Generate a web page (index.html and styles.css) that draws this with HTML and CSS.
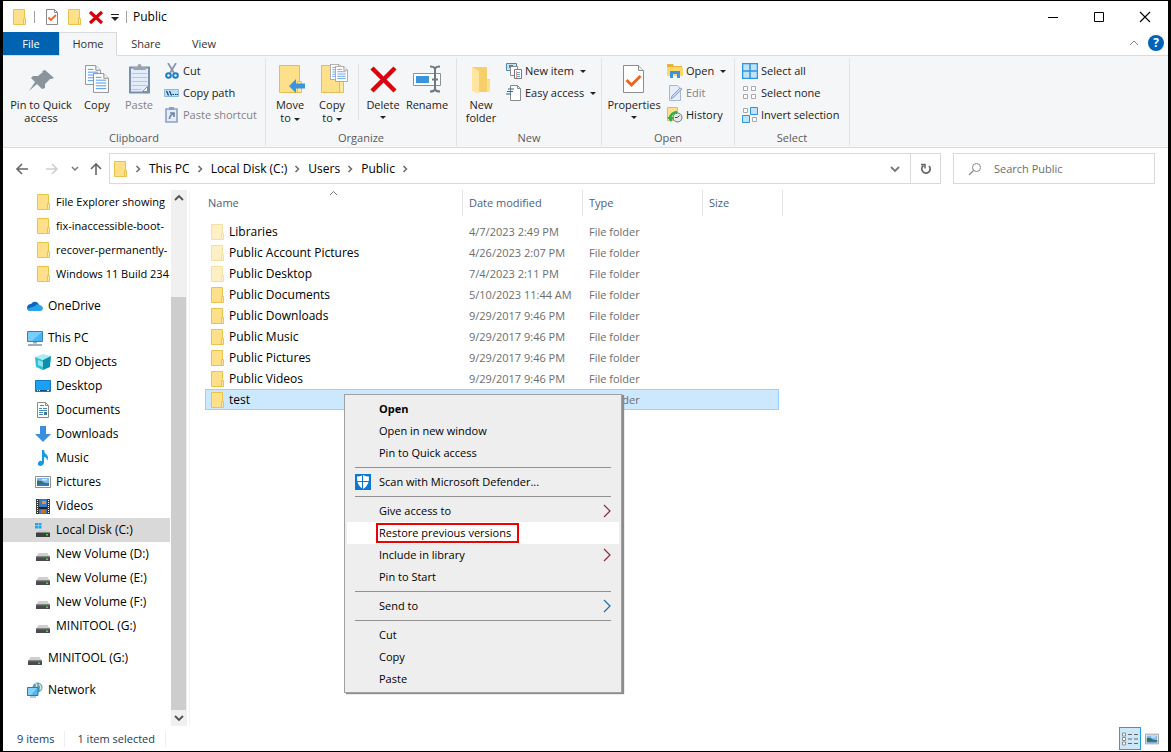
FILE: index.html
```html
<!DOCTYPE html>
<html lang="en">
<head>
    <meta charset="UTF-8">
    <meta name="viewport" content="width=device-width, initial-scale=1.0">
    <title>Public</title>
    <link rel="stylesheet" href="styles.css">
</head>
<body>

    <!-- shared icons -->
    <svg class="sprite" aria-hidden="true">
        <symbol id="folder" viewBox="0 0 16 16">
            <path d="M2.500 .5h11v15h-11z" fill="#ffe08a" stroke="#ebc24a"/>
            <path d="M12.500 9.500h2v6h-2z" fill="#ffe9a6" stroke="#ebc24a"/>
        </symbol>
        <symbol id="check" viewBox="0 0 16 16">
            <path d="M2.500 .5h8l3 3v12h-11z" fill="#fff" stroke="#8a8a8a"/>
            <path d="M10.500 .5v3h3" fill="none" stroke="#8a8a8a"/>
            <path d="M4.500 8.500l2.500 2.500 5-5" fill="none" stroke="#f2641c" stroke-width="1.800"/>
        </symbol>
        <symbol id="cross" viewBox="0 0 16 16">
            <path d="M2 3l12 11M14 3L2 14" fill="none" stroke="#d9000d" stroke-width="3.200"/>
        </symbol>
        <symbol id="page" viewBox="0 0 17 21">
            <path d="M.5 .5h11l5 5v15h-16z" fill="#fff" stroke="#8c8c8c"/>
            <path d="M11.500 .5v5h5" fill="#eee" stroke="#8c8c8c"/>
            <path d="M3 4.500h6M3 7.500h11M3 10.500h11M3 13.500h11M3 16.500h11" stroke="#4a8fe8"/>
        </symbol>
        <symbol id="drive" viewBox="0 0 16 16">
            <path d="M3.500 7h9l2.500 4H1z" fill="#cfcfcf"/>
            <path d="M1 10.500h14v4.500H1z" fill="#4a4a4a"/>
            <path d="M1 10.500h14v1H1z" fill="#777"/>
            <path d="M11 12.500h2v1.500h-2z" fill="#3ddc4a"/>
        </symbol>
        <symbol id="picture" viewBox="0 0 16 16">
            <path d="M.5 2.500h15v11H.5z" fill="#fff" stroke="#8f8f8f"/>
            <path d="M2 4h12v8H2z" fill="#7db8ef"/>
            <path d="M2 6.500q5 0 6 1.500t6 1v1.500H2z" fill="#3e6b62"/>
            <path d="M2 10h12v2H2z" fill="#3676b4"/>
            <path d="M7 5h5v1.500H7z" fill="#d9ecfb"/>
        </symbol>
        <symbol id="chevron" viewBox="0 0 8 8">
            <path d="M2.500 1l3 3-3 3" fill="none" stroke="#6b6b6b" stroke-width="1.500"/>
        </symbol>
        <symbol id="arrowRight" viewBox="0 0 10 16">
            <path d="M2 2l6 6-6 6" fill="none" stroke="currentColor" stroke-width="1.200"/>
        </symbol>
    </svg>

    <div class="window">

        <header class="titleBar">
            <svg class="icon"><use href="#folder"/></svg>
            <span class="titleSep"></span>
            <button class="quickBtn" aria-label="Properties"><svg class="icon"><use href="#check"/></svg></button>
            <button class="quickBtn" aria-label="New folder"><svg class="icon"><use href="#folder"/></svg></button>
            <button class="quickBtn" aria-label="Delete"><svg class="icon"><use href="#cross"/></svg></button>
            <button class="quickMore" aria-label="Customize">
                <svg width="8" height="8" viewBox="0 0 8 8"><path d="M0 1.500h8" stroke="#222"/><path d="M0 4h8L4 8z" fill="#222"/></svg>
            </button>
            <span class="titleSep"></span>
            <h1 class="title">Public</h1>
            <button class="winBtn winFirst" aria-label="Minimize"><svg width="12" height="12"><path d="M1 6.500h10" stroke="#000"/></svg></button>
            <button class="winBtn" aria-label="Maximize"><svg width="12" height="12"><path d="M1.500 1.500h9v9h-9z" fill="none" stroke="#000"/></svg></button>
            <button class="winBtn" aria-label="Close"><svg width="12" height="12"><path d="M1 1l10 10M11 1L1 11" stroke="#000" stroke-width="1.100"/></svg></button>
        </header>

        <nav class="tabs">
            <button class="tab tabFile">File</button>
            <button class="tab active">Home</button>
            <button class="tab">Share</button>
            <button class="tab">View</button>
            <button class="tabTool tabToolFirst" aria-label="Collapse ribbon"><svg width="10" height="8"><path d="M1 6l4-4 4 4" fill="none" stroke="#888"/></svg></button>
            <button class="tabTool help" aria-label="Help">?</button>
        </nav>

        <div class="ribbon">
            <section class="group groupClipboard">
                <div class="groupBody">
                    <button class="big bigPin">
                        <svg class="bigIcon" viewBox="0 0 32 32"><path d="M20 6l9 8-3 1-1 0-5 5 0 4-3 1-5-5-8 7 6-9-4-4 2-2h5l5-4-1-1z" fill="#8b939c"/></svg>
                        Pin to Quick access
                    </button>
                    <button class="big">
                        <svg class="bigIcon" viewBox="0 0 32 32"><use href="#page" x="4" y="1" width="16" height="20"/><use href="#page" x="12" y="9" width="16" height="20"/></svg>
                        Copy
                    </button>
                    <button class="big" disabled>
                        <svg class="bigIcon" viewBox="0 0 32 32">
                            <path d="M7 3.500h19v25h-19z" fill="#e3ecf8" stroke="#7a8ead" stroke-width="2"/>
                            <path d="M8.500 9.500h16M8.500 13.500h16M8.500 17.500h16M8.500 21.500h16M8.500 25.500h10" stroke="#b6c8e4"/>
                            <path d="M19.500 27.500l5-5v5z" fill="#fff" stroke="#7a8ead"/>
                            <path d="M10.500 6V3h4q0-3 2-3t2 3h4v3z" fill="#9aa3b0"/>
                        </svg>
                        Paste
                    </button>
                    <div class="smallList">
                        <button class="small">
                            <svg class="icon" viewBox="0 0 16 16"><path d="M4 0l6 10M12 0L6 10" stroke="#8a97a5" stroke-width="1.800"/><circle cx="4.500" cy="12.500" r="2.300" fill="none" stroke="#1b7fc9" stroke-width="2"/><circle cx="11.500" cy="12.500" r="2.300" fill="none" stroke="#1b7fc9" stroke-width="2"/></svg>
                            Cut
                        </button>
                        <button class="small">
                            <svg class="icon" viewBox="0 0 16 16"><path d="M.5 4.500h14v7H.5z" fill="#b9e0fa" stroke="#8ab8dc"/><path d="M2.500 6l2 4.500M5.500 6l2 4.500" stroke="#1b3c66" stroke-width="1.200"/><path d="M8.500 9.500h1.500M11 9.500h1.500M13 9.500h1" stroke="#1b3c66"/></svg>
                            Copy path
                        </button>
                        <button class="small" disabled>
                            <svg class="icon" viewBox="0 0 16 16"><path d="M2 2h11v13H2z" fill="#e3ecf8" stroke="#8fa1bd" stroke-width="1.600"/><path d="M5 0h5v3H5z" fill="#8fa1bd"/><path d="M5.500 12q0-4 4-5M6 6h4v4" fill="none" stroke="#6e84a8" stroke-width="1.600"/></svg>
                            Paste shortcut
                        </button>
                    </div>
                </div>
                <h2 class="groupName">Clipboard</h2>
            </section>

            <section class="group groupOrganize">
                <div class="groupBody">
                    <button class="big">
                        <svg class="bigIcon" viewBox="0 0 32 32"><path d="M5.500 1.500h20v27h-20z" fill="#ffe08a" stroke="#e3bd55"/><path d="M23.500 17.500h4v11h-4z" fill="#ffe9a6" stroke="#e3bd55"/><path d="M15 22l7-7v4.500h9v5h-9V29z" fill="#3a94e0"/></svg>
                        <span>Move<br>to<i class="caret"></i></span>
                    </button>
                    <button class="big">
                        <svg class="bigIcon" viewBox="0 0 32 32"><path d="M5.500 1.500h19v27h-19z" fill="#ffe08a" stroke="#e3bd55"/><path d="M23.500 17.500h4v11h-4z" fill="#ffe9a6" stroke="#e3bd55"/><use href="#page" x="14" y="0" width="13" height="16"/><use href="#page" x="19" y="2" width="13" height="16"/></svg>
                        <span>Copy<br>to<i class="caret"></i></span>
                    </button>
                    <span class="innerSep"></span>
                    <button class="big">
                        <svg class="bigIcon" viewBox="0 0 32 32"><path d="M5 4l23 23M28 4L5 27" stroke="#df000c" stroke-width="4.500"/></svg>
                        <span>Delete<i class="caret caretBlock"></i></span>
                    </button>
                    <button class="big bigRename">
                        <svg class="bigIcon" viewBox="0 0 32 32"><path d="M2.500 9.500h27v12h-27z" fill="#fff" stroke="#8b9197"/><path d="M5 12h13v7H5z" fill="#3a94e0"/><path d="M19 2.500q4 0 5 2 1-2 5-2M19 27.500q4 0 5-2 1 2 5 2M24 4v22M21 15.500h6" fill="none" stroke="#6f7780" stroke-width="2"/></svg>
                        Rename
                    </button>
                </div>
                <h2 class="groupName">Organize</h2>
            </section>

            <section class="group groupNew">
                <div class="groupBody">
                    <button class="big">
                        <svg class="bigIcon" viewBox="0 0 32 32"><path d="M7 3h15v12h3v13H11z" fill="#f7cf6a"/><path d="M7 3l7 4v23l-7-3z" fill="#ffe5a0"/><path d="M22 15l3 1v12h-3z" fill="#ffdf8c"/></svg>
                        New folder
                    </button>
                    <div class="smallList">
                        <button class="small">
                            <svg class="icon" viewBox="0 0 16 16"><path d="M.5 .5h10v7H.5z" fill="#c6e4f5" stroke="#4e87a8"/><path d="M3 2h4v3H3z" fill="#3c7fb0"/><path d="M4.500 3.500h7v9h-7z" fill="#fff" stroke="#8a8a8a"/><path d="M8.500 6.500h7v9h-7z" fill="#fff" stroke="#7a7a7a"/><path d="M10 9.500h4M10 11.500h4M10 13.500h4" stroke="#6aa2da"/><path d="M10.500 8v7" stroke="#e59a9a"/></svg>
                            New item<i class="caret"></i>
                        </button>
                        <button class="small">
                            <svg class="icon" viewBox="0 0 16 16"><path d="M4.500 .5h7l3 3v12h-10z" fill="#fff" stroke="#8a8a8a"/><path d="M11.500 .5v3h3" fill="none" stroke="#8a8a8a"/><path d="M2 4h6M1 6.500h6M0 9h5" stroke="#2469a8" stroke-width="1.200"/></svg>
                            Easy access<i class="caret"></i>
                        </button>
                    </div>
                </div>
                <h2 class="groupName">New</h2>
            </section>

            <section class="group groupOpen">
                <div class="groupBody">
                    <button class="big bigProps">
                        <svg class="bigIcon" viewBox="0 0 32 32"><path d="M5.500 1.500h15l5 5v22h-20z" fill="#fff" stroke="#8c8c8c"/><path d="M20.500 1.500v5h5" fill="#eee" stroke="#8c8c8c"/><path d="M8.500 16l5 5 9-9" fill="none" stroke="#f2641c" stroke-width="3"/></svg>
                        <span>Properties<i class="caret caretBlock"></i></span>
                    </button>
                    <div class="smallList">
                        <button class="small">
                            <svg class="icon" viewBox="0 0 16 16"><path d="M0 1h6l1 2h8v10H0z" fill="#e8b23a"/><path d="M0 4h16v9H0z" fill="#ffd766"/><path d="M3 15V8h10v7h-3v-4H6v4z" fill="#3a94e0"/></svg>
                            Open<i class="caret"></i>
                        </button>
                        <button class="small" disabled>
                            <svg class="icon" viewBox="0 0 16 16"><path d="M2.500 .5h8l3 3v12h-11z" fill="#e6eefa" stroke="#a7b6d2"/><path d="M15 4l-8 8-3 2 1-3 8-8z" fill="#c9d6ec" stroke="#8ea2c6"/></svg>
                            Edit
                        </button>
                        <button class="small">
                            <svg class="icon" viewBox="0 0 16 16"><path d="M.5 .5h10v13H.5z" fill="#ffe08a" stroke="#e3bd55"/><circle cx="10.500" cy="10.500" r="4.500" fill="#e4e7e9" stroke="#737a80"/><path d="M10.500 10.500l2-2M10.500 10.500H8" stroke="#444"/><path d="M3 12q0-6 7-7" fill="none" stroke="#2bb04a" stroke-width="2.500"/><path d="M0 10h7l-3 5z" fill="#2bb04a"/></svg>
                            History
                        </button>
                    </div>
                </div>
                <h2 class="groupName">Open</h2>
            </section>

            <section class="group groupSelect">
                <div class="groupBody">
                    <div class="smallList">
                        <button class="small">
                            <svg class="icon" viewBox="0 0 16 16"><path d="M.5 .5h15v15H.5zM8 0v16M0 8h16" fill="#bfe3fb" stroke="#2e94e2" stroke-width="1.500"/></svg>
                            Select all
                        </button>
                        <button class="small">
                            <svg class="icon" viewBox="0 0 16 16"><path d="M1.500 1.500h4v4h-4zM9.500 1.500h4v4h-4zM1.500 9.500h4v4h-4zM9.500 9.500h4v4h-4z" fill="#fff" stroke="#a8a8a8"/></svg>
                            Select none
                        </button>
                        <button class="small">
                            <svg class="icon" viewBox="0 0 16 16"><path d="M1.500 1.500h4v4h-4zM10.500 10.500h4v4h-4z" fill="#fff" stroke="#a8a8a8"/><path d="M8.500 .5h7v7h-7zM.5 8.500h7v7h-7z" fill="#bfe3fb" stroke="#2e94e2"/></svg>
                            Invert selection
                        </button>
                    </div>
                </div>
                <h2 class="groupName">Select</h2>
            </section>
        </div>

        <div class="navRow">
            <button class="navBtn" aria-label="Back"><svg width="14" height="12"><path d="M13 6H2M7 1L2 6l5 5" fill="none" stroke="#666" stroke-width="1.600"/></svg></button>
            <button class="navBtn" aria-label="Forward" disabled><svg width="14" height="12"><path d="M1 6h11M7 1l5 5-5 5" fill="none" stroke="#d0d0d0" stroke-width="1.600"/></svg></button>
            <button class="navBtn navSmall" aria-label="Recent locations"><svg width="8" height="8"><path d="M1 2l3 3 3-3" fill="none" stroke="#777" stroke-width="1.500"/></svg></button>
            <button class="navBtn navUp" aria-label="Up"><svg width="12" height="14"><path d="M6 13V2M1 7l5-5 5 5" fill="none" stroke="#666" stroke-width="1.600"/></svg></button>
            <div class="address">
                <svg class="icon"><use href="#folder"/></svg>
                <svg class="crumbSep"><use href="#chevron"/></svg>
                <a class="crumb" href="#">This PC</a>
                <svg class="crumbSep"><use href="#chevron"/></svg>
                <a class="crumb" href="#">Local Disk (C:)</a>
                <svg class="crumbSep"><use href="#chevron"/></svg>
                <a class="crumb" href="#">Users</a>
                <svg class="crumbSep"><use href="#chevron"/></svg>
                <a class="crumb" href="#">Public</a>
                <svg class="crumbSep"><use href="#chevron"/></svg>
                <button class="addressBtn addressFirst" aria-label="Previous locations"><svg width="10" height="8"><path d="M1 2l4 4 4-4" fill="none" stroke="#777" stroke-width="1.800"/></svg></button>
                <button class="addressBtn refresh" aria-label="Refresh"><svg width="12" height="12"><path d="M9 3a4.200 4.200 0 1 1-5.500-.5" fill="none" stroke="#666" stroke-width="1.700"/><path d="M1 1.500h4v4" fill="none" stroke="#666" stroke-width="1.500"/></svg></button>
            </div>
            <div class="search">
                <svg width="14" height="14"><circle cx="8.500" cy="5.500" r="4" fill="none" stroke="#888"/><path d="M5.500 8.500L1 13" stroke="#888" stroke-width="1.200"/></svg>
                <input class="searchInput" type="text" placeholder="Search Public" aria-label="Search Public">
            </div>
        </div>

        <div class="main">
            <aside class="sidebar">
                <ul class="tree treeSub treeRecent">
                    <li><a class="node" href="#"><svg class="icon"><use href="#folder"/></svg>File Explorer showing</a></li>
                    <li><a class="node" href="#"><svg class="icon"><use href="#folder"/></svg>fix-inaccessible-boot-</a></li>
                    <li><a class="node" href="#"><svg class="icon"><use href="#folder"/></svg>recover-permanently-</a></li>
                    <li><a class="node" href="#"><svg class="icon"><use href="#folder"/></svg>Windows 11 Build 234</a></li>
                </ul>
                <a class="node" href="#"><svg class="icon" viewBox="0 0 16 16"><path d="M4 6q3-4 7-1l1 2-6 6H3q-3-1-3-4 1-3 4-3z" fill="#0a64c2"/><path d="M8 8q2-3 5-1 3 1 3 4-1 2-3 2H3q-2 0-3-2z" fill="#27a3ea"/></svg>OneDrive</a>
                <div>
                    <a class="node" href="#"><svg class="icon" viewBox="0 0 16 16"><path d="M.5 1.500h15v10H.5z" fill="#48b4f4" stroke="#3482b8"/><path d="M1 2h14L5 11H1z" fill="#79cdfb"/><path d="M6 12h4v1.500H6z" fill="#9aa"/><path d="M1 15h14" stroke="#8293a0" stroke-width="1.500"/></svg>This PC</a>
                    <ul class="tree treeSub">
                        <li><a class="node" href="#"><svg class="icon" viewBox="0 0 16 16"><path d="M0 3l8-3 8 2-7 4z" fill="#a8ecf2"/><path d="M0 3l8 3v10l-7-3z" fill="#2fc0d2"/><path d="M8 6l8-4-1 11-7 3z" fill="#0b8fae"/><path d="M3 6l5 2v5l-5-2z" fill="#8be4ec"/></svg>3D Objects</a></li>
                        <li><a class="node" href="#"><svg class="icon" viewBox="0 0 16 16"><path d="M.5 2.500h15v11H.5z" fill="#1aa0f6" stroke="#1478c0"/><path d="M1 12.500h14" stroke="#0c4f86"/><path d="M2 12.500h1M4 12.500h1M12 12.500h2" stroke="#fff"/></svg>Desktop</a></li>
                        <li><a class="node" href="#"><svg class="icon" viewBox="0 0 16 16"><path d="M2.500 .5h8l3 3v12h-11z" fill="#fff" stroke="#8a8a8a"/><path d="M10.500 .5v3h3" fill="none" stroke="#8a8a8a"/><path d="M5 3.500h4M4 6.500h3M8 6.500h4M4 8.500h8M4 10.500h4M4 12.500h4" stroke="#3f88b8"/><path d="M9 10h3v3H9z" fill="#48738a"/></svg>Documents</a></li>
                        <li><a class="node" href="#"><svg class="icon" viewBox="0 0 16 16"><path d="M5 0h6v8h5l-8 8-8-8h5z" fill="#3a8fdd"/></svg>Downloads</a></li>
                        <li><a class="node" href="#"><svg class="icon" viewBox="0 0 16 16"><path d="M7 0h2q0 3 3 5 2 2 0 6 0-4-3-4v6q-1 3-4 3-3-1-2-3 1-3 4-2z" fill="#159ae8"/></svg>Music</a></li>
                        <li><a class="node" href="#"><svg class="icon"><use href="#picture"/></svg>Pictures</a></li>
                        <li><a class="node" href="#"><svg class="icon" viewBox="0 0 16 16"><path d="M1 1h14v15H1z" fill="#3b3b3b"/><path d="M4 1h8v15H4z" fill="#3c78c8"/><path d="M4 9h8v2H4z" fill="#222"/><path d="M7 3h4v3H7z" fill="#d89a2b"/><path d="M6 12h4v3H6z" fill="#c4752a"/><path d="M2.500 2v14M13.500 2v14" stroke="#fff" stroke-dasharray="1 1"/></svg>Videos</a></li>
                        <li><a class="node selected" href="#"><svg class="icon" viewBox="0 0 16 16"><path d="M0 1h3v2.500H0zM3.500 1h3v2.500h-3zM0 4h3v2.500H0zM3.500 4h3v2.500h-3z" fill="#19a9ee"/><path d="M4 8h9l2 3H2z" fill="#cfcfcf"/><path d="M1 10.500h14V15H1z" fill="#3f3f3f"/><path d="M11 12h2v1.500h-2z" fill="#3ddc4a"/></svg>Local Disk (C:)</a></li>
                        <li><a class="node" href="#"><svg class="icon"><use href="#drive"/></svg>New Volume (D:)</a></li>
                        <li><a class="node" href="#"><svg class="icon"><use href="#drive"/></svg>New Volume (E:)</a></li>
                        <li><a class="node" href="#"><svg class="icon"><use href="#drive"/></svg>New Volume (F:)</a></li>
                        <li><a class="node" href="#"><svg class="icon"><use href="#drive"/></svg>MINITOOL (G:)</a></li>
                    </ul>
                </div>
                <a class="node" href="#"><svg class="icon"><use href="#drive"/></svg>MINITOOL (G:)</a>
                <a class="node" href="#"><svg class="icon" viewBox="0 0 16 16"><circle cx="10.500" cy="5.500" r="5" fill="#5a9cc0"/><path d="M8 1q3 2 1 4M12 2q3 3 1 6" fill="none" stroke="#cfe6c8" stroke-width="1.500"/><path d="M.5 5.500h10.500v8H.5z" fill="#4fb6f2" stroke="#2f78ac"/><path d="M1 6h9l-6 7H1z" fill="#86d2fa"/><path d="M3 15h6" stroke="#8293a0"/></svg>Network</a>
            </aside>
            <div class="scroll">
                <button class="scrollBtn" aria-label="Scroll up"><svg width="10" height="8"><path d="M1 6l4-4 4 4" fill="none" stroke="#505050" stroke-width="1.800"/></svg></button>
                <div class="scrollTrack"><div class="scrollThumb"></div></div>
                <button class="scrollBtn" aria-label="Scroll down"><svg width="10" height="8"><path d="M1 2l4 4 4-4" fill="none" stroke="#505050" stroke-width="1.800"/></svg></button>
            </div>

            <div class="content">
                <table class="files">
                    <colgroup>
                        <col class="colName"><col class="colText"><col class="colText"><col class="colSize"><col>
                    </colgroup>
                    <thead>
                        <tr>
                            <th>Name<svg class="sortMark" width="9" height="6"><path d="M1 5l3.500-3.500L8 5" fill="none" stroke="#777"/></svg></th>
                            <th>Date modified</th>
                            <th>Type</th>
                            <th colspan="2">Size</th>
                        </tr>
                    </thead>
                    <tbody>
                        <tr><td class="hiddenItem"><svg class="icon"><use href="#folder"/></svg>Libraries</td><td>4/7/2023 2:49 PM</td><td>File folder</td><td></td></tr>
                        <tr><td class="hiddenItem"><svg class="icon"><use href="#folder"/></svg>Public Account Pictures</td><td>4/26/2023 2:07 PM</td><td>File folder</td><td></td></tr>
                        <tr><td class="hiddenItem"><svg class="icon"><use href="#folder"/></svg>Public Desktop</td><td>7/4/2023 2:11 PM</td><td>File folder</td><td></td></tr>
                        <tr><td><svg class="icon"><use href="#folder"/></svg>Public Documents</td><td>5/10/2023 11:44 AM</td><td>File folder</td><td></td></tr>
                        <tr><td><svg class="icon"><use href="#folder"/></svg>Public Downloads</td><td>9/29/2017 9:46 PM</td><td>File folder</td><td></td></tr>
                        <tr><td><svg class="icon"><use href="#folder"/></svg>Public Music</td><td>9/29/2017 9:46 PM</td><td>File folder</td><td></td></tr>
                        <tr><td><svg class="icon"><use href="#folder"/></svg>Public Pictures</td><td>9/29/2017 9:46 PM</td><td>File folder</td><td></td></tr>
                        <tr><td><svg class="icon"><use href="#folder"/></svg>Public Videos</td><td>9/29/2017 9:46 PM</td><td>File folder</td><td></td></tr>
                        <tr class="rowSelected"><td><svg class="icon"><use href="#folder"/></svg>test</td><td></td><td>File folder</td><td></td></tr>
                    </tbody>
                </table>

                <div class="menu" role="menu">
                    <button class="menuItem menuDefault">Open</button>
                    <button class="menuItem">Open in new window</button>
                    <button class="menuItem">Pin to Quick access</button>
                    <hr class="menuSep">
                    <button class="menuItem">
                        <svg class="menuIcon" viewBox="0 0 16 16"><path d="M0 0h16v16H0z" fill="#0a78d7"/><path d="M8 1q3 1.500 6 1.500 .5 9-6 12.500-6.500-3.500-6-12.500Q5 2.500 8 1z" fill="#fff"/><path d="M7.500 0v16M1 7.500h14" stroke="#0a78d7"/></svg>
                        Scan with Microsoft Defender...
                    </button>
                    <hr class="menuSep">
                    <button class="menuItem">Give access to<svg class="menuArrow arrowRed"><use href="#arrowRight"/></svg></button>
                    <button class="menuItem hovered"><span class="marked">Restore previous versions</span></button>
                    <button class="menuItem">Include in library<svg class="menuArrow arrowRed"><use href="#arrowRight"/></svg></button>
                    <button class="menuItem">Pin to Start</button>
                    <hr class="menuSep">
                    <button class="menuItem">Send to<svg class="menuArrow arrowBlue"><use href="#arrowRight"/></svg></button>
                    <hr class="menuSep">
                    <button class="menuItem">Cut</button>
                    <button class="menuItem">Copy</button>
                    <button class="menuItem">Paste</button>
                </div>
            </div>
        </div>

        <footer class="status">
            <span class="statusItem">9 items</span>
            <span class="statusItem">1 item selected</span>
            <button class="viewBtn viewFirst active" aria-label="Details view">
                <svg width="16" height="14"><path d="M.5 1h3v3h-3zM.5 5.500h3v3h-3zM.5 10h3v3h-3z" fill="#fff" stroke="#8b8b8b"/><path d="M6 2.500h4M12 2.500h4M6 7h4M12 7h4M6 11.500h4M12 11.500h4" stroke="#666"/></svg>
            </button>
            <button class="viewBtn" aria-label="Large icons view"><svg class="viewIcon"><use href="#picture"/></svg></button>
        </footer>
    </div>

</body>
</html>
```
FILE: styles.css
```css
*{
    padding: 0;
    margin: 0;
    box-sizing: border-box;
}
body{
    background-color: #000;
    font-family: "Open Sans", "Noto Sans", sans-serif;
    font-size: 12px;
    line-height: 16px;
    color: #000;
}
ul{
    list-style: none;
}
a{
    color: inherit;
    text-decoration: none;
}
button{
    border: 0;
    background: none;
    font: inherit;
    color: inherit;
}
h1,h2{
    font-size: 12px;
    font-weight: normal;
}
svg{
    display: block;
    flex: none;
}
.sprite{
    position: absolute;
    width: 0;
    height: 0;
}
.icon{
    width: 16px;
    height: 16px;
}
.window{
    display: flex;
    flex-direction: column;
    min-height: 100vh;
    border: solid #000;
    border-width: 1px 3px 1px 3px;
    background-color: #fff;
}

/* title bar */
.titleBar{
    display: flex;
    align-items: center;
    height: 31px;
    padding-left: 8px;
}
.titleSep{
    width: 1px;
    height: 12px;
    margin: 0 6px 0 7px;
    background-color: #a0a0a0;
}
.quickBtn{
    width: 22px;
    display: flex;
    justify-content: center;
}
.quickMore{
    margin-left: 4px;
}
.winBtn{
    width: 46px;
    height: 30px;
    display: flex;
    align-items: center;
    justify-content: center;
}
.winFirst{
    margin-left: auto;
}

/* tabs */
.tabs{
    display: flex;
    height: 24px;
    font-size: 11px;
    color: #333;
    border-bottom: 1px solid #dadbdc;
}
.tab{
    width: 58px;
    height: 24px;
}
.tabFile{
    width: 56px;
    height: 23px;
    background-color: #0063b1;
    color: #fff;
}
.tab.active{
    background-color: #f5f6f7;
    border: 1px solid #dadbdc;
    border-bottom-color: #f5f6f7;
}
.tabTool{
    width: 16px;
    height: 16px;
    display: flex;
    align-items: center;
    justify-content: center;
    margin: 3px 4px 0 2px;
}
.tabToolFirst{
    margin-left: auto;
}
.help{
    border-radius: 50%;
    background-color: #0063b8;
    color: #fff;
    font-size: 12px;
    font-weight: bold;
}

/* ribbon */
.ribbon{
    display: flex;
    height: 92px;
    padding: 2px 0 1px 0;
    background-color: #f5f6f7;
    border-bottom: 1px solid #dadbdc;
    font-size: 11px;
    color: #222;
}
.group{
    display: flex;
    flex-direction: column;
    justify-content: space-between;
    border-right: 1px solid #e2e3e4;
}
.groupClipboard{
    width: 263px;
}
.groupOrganize{
    width: 191px;
}
.groupNew{
    width: 145px;
}
.groupOpen{
    width: 133px;
}
.groupSelect{
    width: 115px;
}
.groupBody{
    display: flex;
    padding-left: 3px;
    white-space: nowrap;
}
.groupName{
    text-align: center;
    font-size: 11px;
    color: #5a5a5a;
}
.big{
    width: 42px;
    padding-top: 6px;
    line-height: 13px;
    white-space: normal;
    display: flex;
    flex-direction: column;
    align-items: center;
    justify-content: flex-start;
}
.bigPin{
    width: 70px;
}
.bigProps{
    width: 58px;
}
.bigRename{
    width: 46px;
}
.bigIcon{
    width: 32px;
    height: 32px;
    margin-bottom: 2px;
}
.big:disabled,.small:disabled{
    color: #838383;
}
.innerSep{
    width: 1px;
    height: 56px;
    margin: 6px 3px 0 5px;
    background-color: #e2e3e4;
}
.smallList{
    padding: 2px 0 0 2px;
}
.small{
    display: flex;
    align-items: center;
    gap: 3px;
    height: 22px;
    padding-left: 2px;
}
.caret{
    display: inline-block;
    vertical-align: middle;
    margin-left: 3px;
    border: solid transparent;
    border-width: 3px 3px 0 3px;
    border-top-color: #222;
}
.caretBlock{
    display: block;
    width: 6px;
    margin: 5px auto 0 auto;
}

/* navigation row */
.navRow{
    display: flex;
    align-items: center;
    padding: 5px 13px 6px 4px;
}
.navBtn{
    display: flex;
    align-items: center;
    justify-content: center;
    width: 30px;
    height: 30px;
}
.navSmall{
    width: 16px;
}
.navUp{
    width: 26px;
}
.address{
    flex: 1;
    display: flex;
    align-items: center;
    height: 31px;
    padding-left: 2px;
    border: 1px solid #d9d9d9;
}
.crumbSep{
    width: 8px;
    height: 8px;
    margin: 0 7px 0 6px;
}
.addressBtn{
    width: 30px;
    height: 29px;
    display: flex;
    align-items: center;
    justify-content: center;
}
.addressFirst{
    margin-left: auto;
}
.refresh{
    border-left: 1px solid #d9d9d9;
}
.search{
    display: flex;
    align-items: center;
    gap: 12px;
    width: 202px;
    height: 31px;
    margin-left: 12px;
    padding-left: 14px;
    border: 1px solid #d9d9d9;
}
.searchInput{
    flex: 1;
    min-width: 0;
    border: 0;
    outline: 0;
    font: inherit;
    font-size: 11px;
}
.searchInput::placeholder{
    color: #6d6d6d;
    opacity: 1;
}

/* folder tree */
.main{
    flex: 1;
    display: flex;
}
.sidebar{
    display: flex;
    flex-direction: column;
    gap: 8px;
    width: 167px;
    overflow: hidden;
}
.node{
    display: flex;
    align-items: center;
    gap: 5px;
    height: 24px;
    padding-left: 24px;
    white-space: nowrap;
}
.treeSub .node{
    padding-left: 32px;
}
.treeRecent{
    font-size: 11px;
}
.node.selected{
    background-color: #d9d9d9;
}
.scroll{
    display: flex;
    flex-direction: column;
    width: 16px;
    margin: 0 2px 0 1px;
    background-color: #f0f0f0;
}
.scrollBtn{
    height: 16px;
    display: flex;
    align-items: center;
    justify-content: center;
}
.scrollTrack{
    flex: 1;
    display: flex;
    align-items: flex-end;
}
.scrollThumb{
    width: 15px;
    height: 82%;
    background-color: #cdcdcd;
}

/* file list */
.content{
    flex: 1;
    position: relative;
    padding-left: 15px;
    border-left: 1px solid #f3f3f3;
}
.files{
    table-layout: fixed;
    width: 578px;
    border-collapse: separate;
    border-spacing: 0;
    font-size: 11px;
    color: #6d6d6d;
}
.colName{
    width: 258px;
}
.colText{
    width: 120px;
}
.colSize{
    width: 76px;
}
.files th{
    position: relative;
    height: 26px;
    padding-left: 6px;
    border-right: 1px solid #e5e5e5;
    font-weight: normal;
    text-align: left;
    color: #4c607a;
}
.files th:first-child{
    padding-left: 3px;
}
.sortMark{
    position: absolute;
    top: 0;
    left: 0;
    right: 0;
    margin: 0 auto;
}
.files tbody::before{
    content: "";
    display: block;
    height: 5px;
}
.files td{
    height: 21px;
    padding-left: 6px;
    border: solid transparent;
    border-width: 1px 0;
}
.files td:first-child{
    padding-left: 4px;
    font-size: 12px;
    color: #000;
}
.files td .icon{
    float: left;
    margin-right: 4px;
}
.hiddenItem .icon{
    opacity: 0.5;
}
.rowSelected td{
    background-color: #cce8ff;
    border-color: #99d1ff;
}
.rowSelected td:first-child{
    border-left-width: 1px;
    padding-left: 3px;
}
.rowSelected td:last-child{
    border-right-width: 1px;
}

/* context menu */
.menu{
    position: absolute;
    top: 204px;
    left: 154px;
    width: 278px;
    padding: 3px 2px 2px 2px;
    background-color: #eee;
    border: 1px solid #a0a0a0;
    box-shadow: 2px 1px 1px #8c8c8c;
    font-size: 11px;
}
.menuItem{
    position: relative;
    display: flex;
    align-items: center;
    width: 100%;
    height: 22px;
    padding: 0 7px 0 32px;
}
.menuDefault{
    font-weight: bold;
}
.menuItem.hovered{
    background-color: #fff;
}
.marked{
    padding: 0 6px 0 1px;
    margin-left: -1px;
    outline: 2px solid #f00000;
}
.menuIcon{
    width: 16px;
    height: 16px;
    margin: 0 8px 0 -24px;
}
.menuArrow{
    width: 10px;
    height: 16px;
    margin-left: auto;
}
.arrowRed{
    color: #8a2f3a;
}
.arrowBlue{
    color: #2768a8;
}
.menuSep{
    height: 1px;
    margin: 3px 8px;
    border: 0;
    background-color: #919191;
}

/* status bar */
.status{
    display: flex;
    align-items: center;
    height: 25px;
    padding: 0 5px 0 2px;
    font-size: 11px;
    color: #1e395b;
}
.statusItem{
    padding: 0 10px 0 12px;
    border-right: 1px solid #eee;
}
.viewBtn{
    width: 22px;
    height: 23px;
    display: flex;
    align-items: center;
    justify-content: center;
}
.viewFirst{
    margin-left: auto;
}
.viewBtn.active{
    background-color: #cce8f6;
    border: 1px solid #26a0da;
}
.viewIcon{
    width: 14px;
    height: 14px;
}
```
